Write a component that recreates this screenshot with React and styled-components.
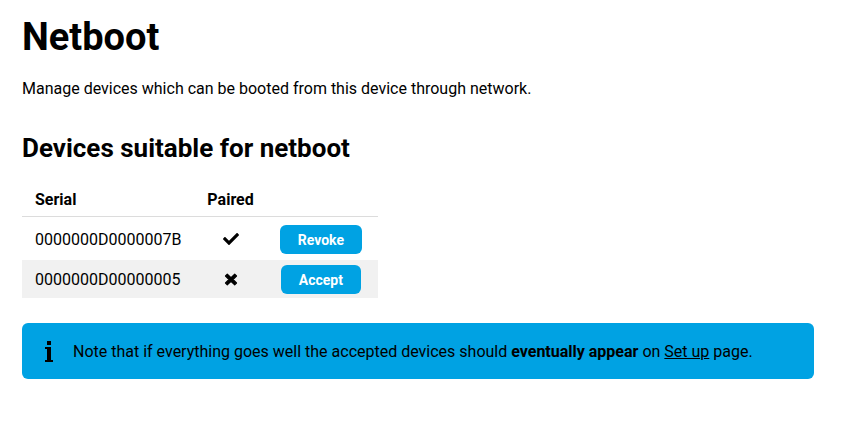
import React from "react";
import styled, { createGlobalStyle } from "styled-components";

const GlobalStyle = createGlobalStyle`
  *, *::before, *::after { box-sizing: border-box; }
  body {
    margin: 0;
    background: #fff;
    color: #000;
    font-family: Roboto, "Liberation Sans", sans-serif;
    font-size: 16px;
    line-height: 24px;
  }
`;

const Page = styled.main`
  padding: 13px 35px 24px 22px;
`;

const Title = styled.h1`
  margin: 0 0 16px;
  font-size: 38px;
  line-height: 48px;
  font-weight: 700;
`;

const Intro = styled.p`
  margin: 0 0 31px;
`;

const Heading = styled.h2`
  margin: 0 0 20px;
  font-size: 26px;
  line-height: 32px;
  font-weight: 700;
`;

const DeviceTable = styled.table`
  border-collapse: separate;
  border-spacing: 0;
  margin-bottom: 25px;
`;

const HeadCell = styled.th`
  height: 33px;
  padding: 0 13px;
  border-bottom: 1px solid #dcdcdc;
  font-weight: 700;
  text-align: left;
`;

const Row = styled.tr`
  background: ${(p) => (p.$striped ? "#f1f1f1" : "transparent")};
`;

const Cell = styled.td`
  height: ${(p) => (p.$tall ? "43px" : "38px")};
  padding: ${(p) => (p.$tall ? "2px" : "1px")} 13px 0;
  text-align: ${(p) => (p.$center ? "center" : "left")};
`;

const ActionCell = styled(Cell)`
  padding-right: 16px;
`;

const Icon = styled.svg`
  display: block;
  margin: 0 auto;
  width: 16px;
  height: 16px;
`;

const ActionButton = styled.button`
  display: block;
  margin: 0 auto;
  height: 29px;
  padding: 0 18px;
  border: 0;
  border-radius: 6px;
  background: #00a2e3;
  color: #fff;
  font: 700 14px/20px Roboto, "Liberation Sans", sans-serif;
  cursor: pointer;
`;

const Notice = styled.aside`
  display: flex;
  align-items: center;
  gap: 19px;
  padding: 17px 22px 15px;
  border-radius: 6px;
  background: #00a2e3;
`;

const InfoIcon = styled.svg`
  flex: none;
  width: 10px;
  height: 24px;
`;

const NoticeText = styled.p`
  margin: 0;
`;

const SetupLink = styled.a`
  color: inherit;
  text-decoration: underline;
`;

const CheckIcon = () => (
  <Icon viewBox="0 32 512 512" role="img" aria-label="Paired">
    <path d="M173.898 439.404l-166.4-166.4c-9.997-9.997-9.997-26.206 0-36.204l36.203-36.204c9.997-9.998 26.207-9.998 36.204 0L192 312.69 432.095 72.596c9.997-9.997 26.207-9.997 36.204 0l36.203 36.204c9.997 9.997 9.997 26.206 0 36.204l-294.4 294.401c-9.998 9.997-26.207 9.997-36.204-.001z" />
  </Icon>
);

const CrossIcon = () => (
  <Icon viewBox="0 0 16 16" role="img" aria-label="Not paired">
    <path
      d="M4.3 2.2 8 5.7l3.7-3.5 1.8 1.8L10 7.5l3.5 3.5-1.8 1.8L8 9.3l-3.7 3.5L2.5 11 6 7.5 2.5 4z"
      stroke="#000"
      strokeWidth="1.2"
      strokeLinejoin="round"
    />
  </Icon>
);

const devices = [
  { serial: "0000000D0000007B", paired: true },
  { serial: "0000000D00000005", paired: false },
];

export default function App() {
  return (
    <>
      <GlobalStyle />
      <Page>
        <Title>Netboot</Title>
        <Intro>Manage devices which can be booted from this device through network.</Intro>
        <Heading>Devices suitable for netboot</Heading>
        <DeviceTable>
          <thead>
            <tr>
              <HeadCell scope="col">Serial</HeadCell>
              <HeadCell scope="col">Paired</HeadCell>
              <HeadCell />
            </tr>
          </thead>
          <tbody>
            {devices.map((d, i) => (
              <Row key={d.serial} $striped={i % 2 === 1}>
                <Cell $tall={i === 0}>{d.serial}</Cell>
                <Cell $tall={i === 0} $center>{d.paired ? <CheckIcon /> : <CrossIcon />}</Cell>
                <ActionCell $tall={i === 0}>
                  <ActionButton type="button">{d.paired ? "Revoke" : "Accept"}</ActionButton>
                </ActionCell>
              </Row>
            ))}
          </tbody>
        </DeviceTable>
        <Notice>
          <InfoIcon viewBox="0 0 10 24" aria-hidden="true">
            <path d="M3 1h4v4H3zM1 7h6v13h2v2H1v-2h2V9H1z" />
          </InfoIcon>
          <NoticeText>
            Note that if everything goes well the accepted devices should{" "}
            <strong>eventually appear</strong> on <SetupLink href="#setup">Set up</SetupLink> page.
          </NoticeText>
        </Notice>
      </Page>
    </>
  );
}
